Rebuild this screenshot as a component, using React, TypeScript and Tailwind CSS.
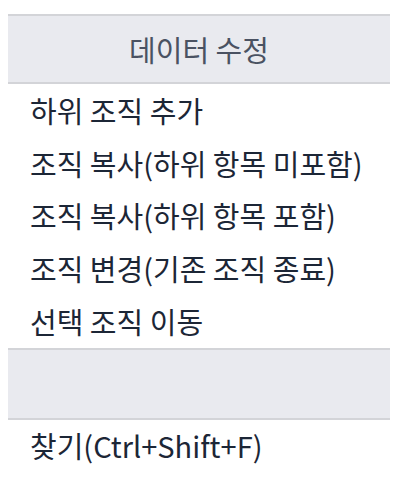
const items = [
  '하위 조직 추가',
  '조직 복사(하위 항목 미포함)',
  '조직 복사(하위 항목 포함)',
  '조직 변경(기존 조직 종료)',
  '선택 조직 이동',
];

export default function App() {
  return (
    <div
      className="w-[402px] h-[488px] bg-white pt-[14px] pl-[8px] pr-[12px]"
      style={{ fontFamily: '"Noto Sans CJK KR", "Noto Sans", sans-serif' }}
    >
      {/* Section header */}
      <div className="h-[70px] border-y-2 border-[#d3d4d8] bg-[#e9eaef] flex items-center justify-center text-[29px] leading-none text-[#4a5262]">
        데이터 수정
      </div>

      {items.map((label) => (
        <div
          key={label}
          className="h-[52.8px] flex items-center pl-[22px] text-[29px] leading-none text-[#1c2636] cursor-default"
        >
          {label}
        </div>
      ))}

      {/* Empty group header */}
      <div className="h-[72px] border-y-2 border-[#d3d4d8] bg-[#e9eaef]" />

      <div className="h-[52px] flex items-center pl-[22px] text-[29px] leading-none text-[#1c2636]">
        찾기(Ctrl+Shift+F)
      </div>
    </div>
  );
}
